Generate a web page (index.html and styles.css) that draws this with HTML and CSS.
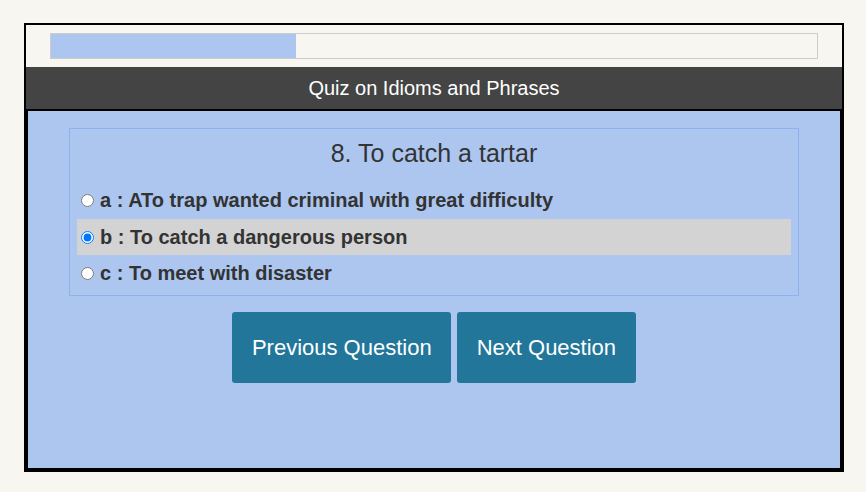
FILE: index.html
```html
<!DOCTYPE html>
<html>
<head>
<meta charset="utf-8">
<link rel="stylesheet" href="styles.css">
</head>
<body>
<div class="quiz">
  <div class="progress-wrap">
    <div class="progress"><div class="progress-fill" style="width:32%"></div></div>
  </div>
  <div class="header">Quiz on Idioms and Phrases</div>
  <div class="body">
    <div class="question">
      <div class="title">8. To catch a tartar</div>
      <label class="option first"><input type="radio" name="q"> a : ATo trap wanted criminal with great difficulty</label>
      <label class="option selected"><input type="radio" name="q" checked> b : To catch a dangerous person</label>
      <label class="option"><input type="radio" name="q"> c : To meet with disaster</label>
    </div>
    <div class="buttons">
      <button class="btn">Previous Question</button>
      <button class="btn">Next Question</button>
    </div>
  </div>
</div>
</body>
</html>
```

FILE: styles.css
```css
* { box-sizing: border-box; }
html, body { margin: 0; padding: 0; }
body {
  background: #f7f6f1;
  font-family: "Liberation Sans", Arial, sans-serif;
  color: #333;
}
.quiz {
  margin: 23px 0 0 24px;
  width: 820px;
  height: 449px;
  border: 2px solid #000;
  display: flex;
  flex-direction: column;
}
.progress-wrap {
  padding: 8px 24px;
}
.progress {
  height: 26px;
  border: 1px solid #cccccc;
  background: #f7f6f1;
}
.progress-fill {
  height: 100%;
  background: #adc6f0;
}
.header {
  background: #444444;
  color: #fff;
  height: 42px;
  line-height: 42px;
  text-align: center;
  font-size: 20px;
}
.body {
  flex: 1;
  background: #adc6f0;
  border: 2px solid #000;
  padding: 17px 41px 0;
}
.question {
  border: 1px solid #8fb1ee;
  padding: 0 7px 4px;
}
.title {
  text-align: center;
  font-size: 25px;
  line-height: 30px;
  margin: 9px 0 14px;
}
.option {
  display: flex;
  align-items: center;
  height: 36px;
  font-size: 20px;
  font-weight: bold;
  color: #333;
}
.option.first {
  height: 37px;
}
.option input {
  margin: 0 6px 0 4px;
  width: 13px;
  height: 13px;
}
.option.selected {
  background: #d3d3d3;
}
.buttons {
  display: flex;
  justify-content: center;
  gap: 6px;
  margin-top: 16px;
}
.btn {
  background: #21769a;
  color: #fff;
  border: none;
  border-radius: 3px;
  font-family: "Liberation Sans", Arial, sans-serif;
  font-size: 22px;
  line-height: 25px;
  padding: 23px 19.5px;
}
```
